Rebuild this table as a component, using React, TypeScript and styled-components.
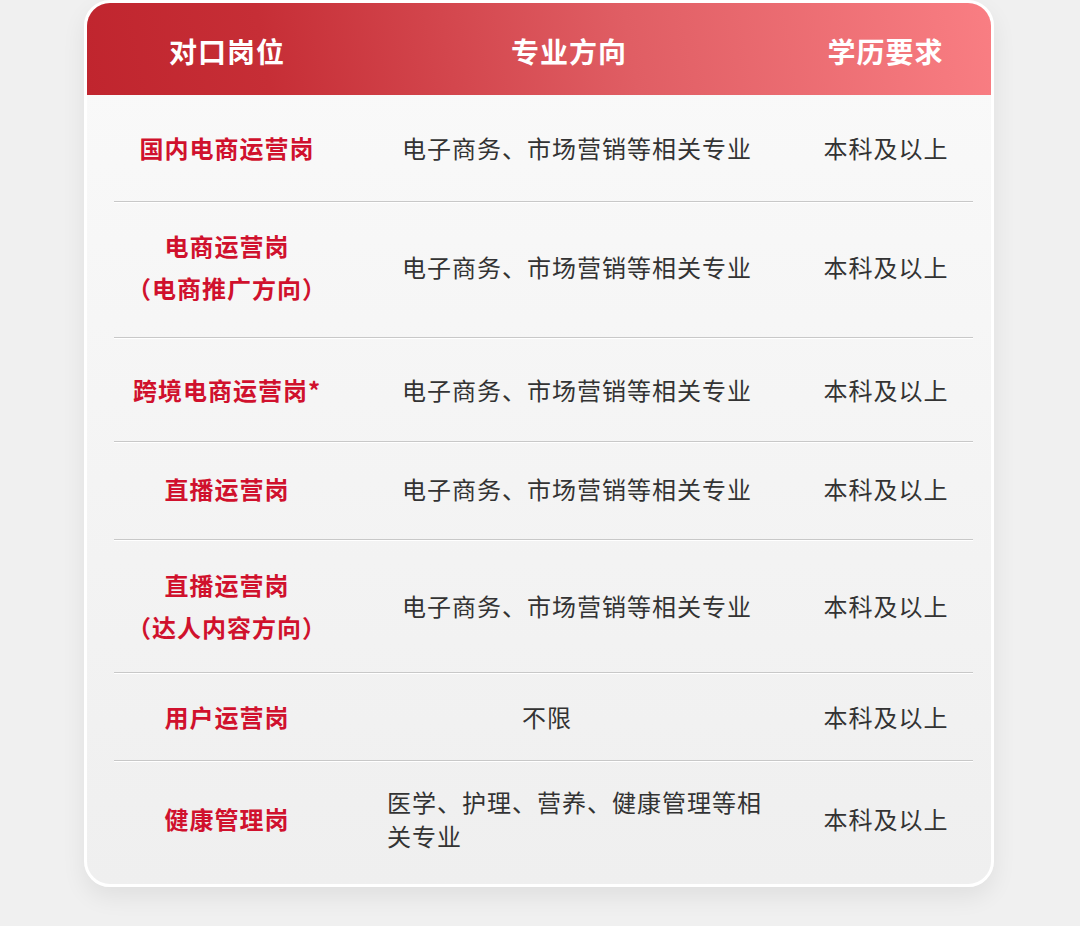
import React from "react";
import styled, { createGlobalStyle } from "styled-components";

const Global = createGlobalStyle`
  html, body {
    margin: 0;
    padding: 0;
    background: #f0f0f0;
  }
  body {
    font-family: "Noto Sans CJK SC", "Noto Sans", sans-serif;
  }
`;

const Page = styled.div`
  width: 1080px;
  height: 926px;
  background: #f0f0f0;
  overflow: hidden;
`;

const Card = styled.div`
  margin-left: 84px;
  width: 910px;
  box-sizing: border-box;
  border: 3px solid #ffffff;
  border-radius: 26px;
  overflow: hidden;
  background: linear-gradient(180deg, #fafafa 0%, #f5f5f5 45%, #efefef 100%);
  box-shadow: 0 10px 24px rgba(0, 0, 0, 0.07);
`;

const Header = styled.div`
  height: 92px;
  display: grid;
  grid-template-columns: 226px 458px 1fr;
  align-items: center;
  padding: 0 18px 0 27px;
  background: linear-gradient(80deg, #c0252e 0%, #c62e36 20%, #e05e64 60%, #f97e83 100%);
`;

const HeadCell = styled.div`
  color: #ffffff;
  font-weight: 700;
  font-size: 28px;
  letter-spacing: 1px;
  text-align: center;
  line-height: 1;
  padding-top: 4px;
`;

const Body = styled.div`
  padding: 0 18px 7px 27px;
`;

const Row = styled.div<{ $h: number; $pb?: number; $last?: boolean }>`
  height: ${(p) => p.$h}px;
  box-sizing: border-box;
  padding-bottom: ${(p) => p.$pb ?? 0}px;
  display: grid;
  grid-template-columns: 226px 474px 1fr;
  align-items: center;
  border-bottom: ${(p) => (p.$last ? "none" : "1px solid #c8c8c8")};
  box-shadow: ${(p) => (p.$last ? "none" : "0 1px 0 #ffffff")};
`;

const PostCell = styled.div`
  color: #d0112d;
  font-weight: 700;
  font-size: 24px;
  letter-spacing: 1px;
  line-height: 42px;
  text-align: center;
`;

const MajorCell = styled.div<{ $shift?: number }>`
  display: flex;
  justify-content: center;
  margin-right: ${(p) => (p.$shift ? p.$shift * 2 : 0)}px;
`;

const MajorText = styled.span`
  display: inline-block;
  max-width: 380px;
  text-align: left;
  color: #333333;
  font-size: 24px;
  letter-spacing: 1px;
  line-height: 34px;
`;

const EduCell = styled.div`
  color: #333333;
  font-size: 24px;
  letter-spacing: 1px;
  line-height: 34px;
  text-align: center;
  padding-right: 15px;
`;

type Item = {
  post: string[];
  major: string;
  edu: string;
  h: number;
  pb?: number;
  shift?: number;
};

const items: Item[] = [
  { post: ["国内电商运营岗"], major: "电子商务、市场营销等相关专业", edu: "本科及以上", h: 107 },
  { post: ["电商运营岗", "（电商推广方向）"], major: "电子商务、市场营销等相关专业", edu: "本科及以上", h: 136, pb: 6 },
  { post: ["跨境电商运营岗*"], major: "电子商务、市场营销等相关专业", edu: "本科及以上", h: 104 },
  { post: ["直播运营岗"], major: "电子商务、市场营销等相关专业", edu: "本科及以上", h: 98, pb: 3 },
  { post: ["直播运营岗", "（达人内容方向）"], major: "电子商务、市场营销等相关专业", edu: "本科及以上", h: 133 },
  { post: ["用户运营岗"], major: "不限", edu: "本科及以上", h: 88, shift: 30 },
  { post: ["健康管理岗"], major: "医学、护理、营养、健康管理等相关专业", edu: "本科及以上", h: 116 },
];

export default function App() {
  return (
    <Page>
      <Global />
      <Card>
        <Header>
          <HeadCell>对口岗位</HeadCell>
          <HeadCell>专业方向</HeadCell>
          <HeadCell>学历要求</HeadCell>
        </Header>
        <Body>
          {items.map((it, i) => (
            <Row key={i} $h={it.h} $pb={it.pb} $last={i === items.length - 1}>
              <PostCell>
                {it.post.map((line, j) => (
                  <div key={j}>{line}</div>
                ))}
              </PostCell>
              <MajorCell $shift={it.shift}>
                <MajorText>{it.major}</MajorText>
              </MajorCell>
              <EduCell>{it.edu}</EduCell>
            </Row>
          ))}
        </Body>
      </Card>
    </Page>
  );
}
